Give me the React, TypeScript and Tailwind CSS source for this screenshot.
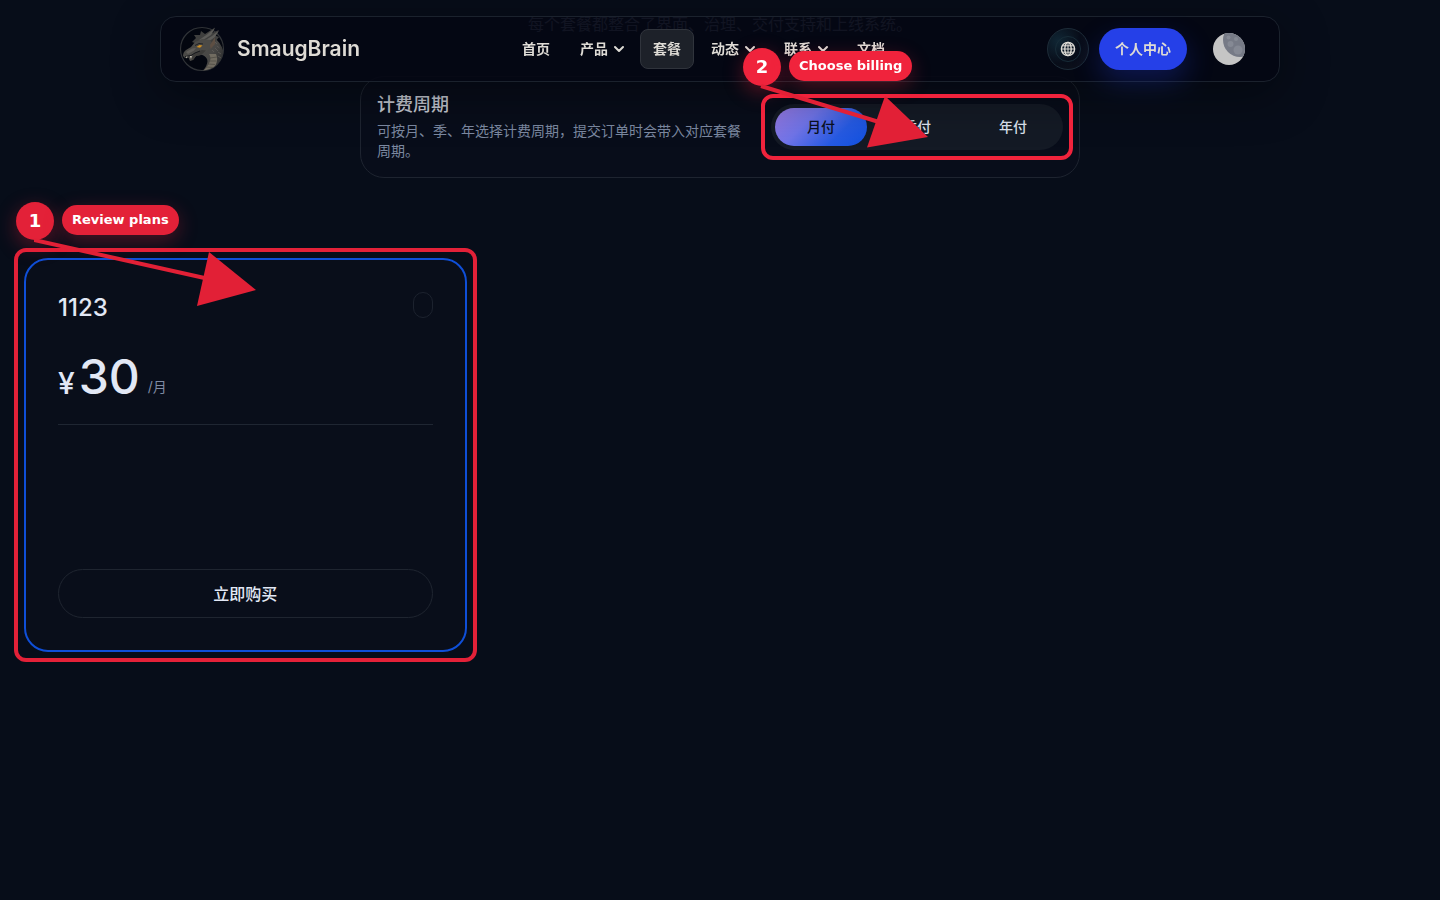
import React from 'react';
import { ChevronDown } from 'lucide-react';

const NAV = [
  { label: '首页', menu: false, active: false },
  { label: '产品', menu: true, active: false },
  { label: '套餐', menu: false, active: true },
  { label: '动态', menu: true, active: false },
  { label: '联系', menu: true, active: false },
  { label: '文档', menu: false, active: false },
];

function DragonLogo() {
  return (
    <svg viewBox="0 0 46 46" className="size-[46px] shrink-0" aria-hidden="true">
      <defs>
        <linearGradient id="neck" x1="0" y1="0" x2="1" y2="0.6">
          <stop offset="0" stopColor="#4b4a48" />
          <stop offset="0.6" stopColor="#484745" />
          <stop offset="1" stopColor="#2c2d2f" />
        </linearGradient>
        <clipPath id="disc"><circle cx="23" cy="23" r="21.500" /></clipPath>
      </defs>
      <circle cx="23" cy="23" r="21.500" fill="#03060f" stroke="#303337" strokeWidth="1.2" />
      <g clipPath="url(#disc)">
        <path d="M24 14 L37 13 Q44 20 45 29 Q44 42 30 46 L23 46 Q30 38 28 33 Q26 29 20 28Z" fill="url(#neck)" />
        <path d="M30 28 Q35 35 23 46 L31 46 Q41 37 37 28Z" fill="#716c61" />
        <path d="M31 32 L38 31 M31 35 L37.500 35 M29 38 L36 38.500 M27 41 L34 41.500" stroke="#4a4741" strokeWidth="0.7" />
        <path d="M36 16 l2 2 M38 20 l2.500 2 M36 22 l3 3 M39 26 l3 2 M39 30 l3 2 M33 24 l2 2" stroke="#5e5c58" strokeWidth="0.8" />
      </g>
      <path d="M16 17 L13 16 L17 12 L15 9 L21 9 L22 5 L26 8 L36 1.500 L33 7 L40 4 L36 9.500 L40 11 L36 16 L30 18Z" fill="#3f3f3e" />
      <path d="M20 14 L28 8.500 L36 2 L32 9 L24 14Z M25 15 L33 10 L40 4.500 L36 11 L29 16Z" fill="#5d5c59" />
      <path d="M4 30 Q4 26 7 24 L12 21 L16 16 L23 13 L31 14 L34 18 L31 22 L27 26 L22 29 L17 30 L14 34 L11 35 L9.500 31.500 L6 32Z" fill="#4b4a47" />
      <path d="M7 26 L13 22.500 L17 22 L15 24.500 L9 28Z" fill="#605e5a" />
      <path d="M15 27 L23 24 L27 24.500 L22 29 L17 30 L14 34 L12.500 33Z" fill="#3c3b39" />
      <path d="M6 30.500 L12 29.500 L16 27 L21 25" stroke="#15171b" strokeWidth="1" fill="none" />
      <path d="M31 19 L36 11.500 L36 18 L31.500 23Z" fill="#5e4f43" />
      <path d="M17.500 21 L20.500 19 L23.500 19.500 L21 21.800Z" fill="#cf8f22" />
      <path d="M16 19.500 L20 17.500 L24 18" stroke="#202124" strokeWidth="1" fill="none" />
      <path d="M7 30.800 l0.800 1.800 l0.700 -2Z M11 30 l1 3 l0.800 -3Z" fill="#d5cfc0" />
    </svg>
  );
}

function GlobeIcon() {
  return (
    <svg viewBox="0 0 16 16" className="size-4" fill="none" stroke="#dedbd5" strokeWidth="1.4" aria-hidden="true">
      <circle cx="8" cy="8" r="6.600" />
      <ellipse cx="8" cy="8" rx="3.200" ry="6.600" />
      <path d="M8 1.400 V14.600 M1.400 8 H14.600 M2.500 4.800 H13.500 M2.500 11.200 H13.500" strokeWidth="1" />
    </svg>
  );
}

function MoonIcon() {
  return (
    <svg viewBox="0 0 32 32" className="size-8" aria-hidden="true">
      <defs><clipPath id="moon"><circle cx="16" cy="16" r="16" /></clipPath></defs>
      <g clipPath="url(#moon)">
        <rect width="32" height="32" fill="#c5c5c5" />
        <circle cx="27" cy="7" r="17" fill="#767a86" />
        <g fill="#858994">
          <circle cx="17.500" cy="11" r="3" />
          <circle cx="25" cy="17" r="4.500" />
          <circle cx="15.500" cy="4.500" r="2" />
          <circle cx="23" cy="6" r="2" />
        </g>
      </g>
    </svg>
  );
}

function Header() {
  return (
    <header className="fixed inset-x-4 top-4 z-20 mx-auto flex h-[66px] max-w-[1120px] items-center justify-between rounded-2xl border border-[#1b222d] bg-[#040713]/90 pr-[34px] pl-[18px] shadow-[0_12px_48px_rgba(0,0,0,0.4)]">
      <a href="#home" className="flex items-center gap-3 text-[21px] font-semibold text-[#dedbd5]">
        <DragonLogo />
        SmaugBrain
      </a>
      <nav aria-label="主导航" className="flex items-center gap-1 text-sm font-bold text-[#dedbd5]">
        {NAV.map((item) => (
          <a
            key={item.label}
            href={'#' + item.label}
            className={
              item.active
                ? 'flex h-10 items-center rounded-lg border border-[#30343c] bg-[#1d2129] px-3'
                : 'flex h-10 items-center gap-[3px] rounded-lg border border-transparent px-3'
            }
          >
            {item.label}
            {item.menu && <ChevronDown className="-mr-1 size-4" strokeWidth={3} />}
          </a>
        ))}
      </nav>
      <div className="flex items-center">
        <button
          type="button"
          aria-label="语言"
          className="mr-2.5 flex size-[42px] items-center justify-center rounded-full border border-[#1d2c38] bg-[radial-gradient(circle_at_25%_30%,#102634,#080d19_55%,#11131c)]"
        >
          <span className="flex size-[26px] items-center justify-center rounded-full border border-[#182c38]">
            <GlobeIcon />
          </span>
        </button>
        <a href="#account" className="mr-[26px] flex h-[42px] items-center rounded-full bg-[#2540e8] px-4 text-sm font-bold text-[#dedbd5] shadow-[0_12px_28px_rgba(37,64,232,0.28)]">
          个人中心
        </a>
        <button type="button" aria-label="切换主题" className="rounded-full">
          <MoonIcon />
        </button>
      </div>
    </header>
  );
}

function Callout({ step, text, tone }: { step: number; text: string; tone: string }) {
  return (
    <div className="flex gap-2 font-['DejaVu_Sans',sans-serif] font-bold text-white">
      <span className={'flex size-[38px] items-center justify-center rounded-full text-lg shadow-[0_6px_20px_rgba(240,35,60,0.35)] ' + tone}>
        {step}
      </span>
      <span className={'mt-[3px] flex h-[30px] items-center rounded-full px-2.5 text-[13px] whitespace-nowrap shadow-[0_6px_20px_rgba(240,35,60,0.3)] ' + tone}>
        {text}
      </span>
    </div>
  );
}

function BillingSwitch() {
  return (
    <div className="relative shrink-0">
      <div role="group" aria-label="计费周期" className="flex gap-1 rounded-full bg-[#141a25] p-1 text-sm font-medium">
        <button type="button" aria-pressed="true" className="h-[38px] w-[92px] rounded-full bg-linear-[135deg,#9678e0,#7074e8_35%,#265ae2_70%,#1150df] text-[#0a1022]">月付</button>
        <button type="button" aria-pressed="false" className="h-[38px] w-[92px] rounded-full text-[#dce2ee]">季付</button>
        <button type="button" aria-pressed="false" className="h-[38px] w-[92px] rounded-full text-[#dce2ee]">年付</button>
      </div>
      <div className="pointer-events-none absolute -inset-2.5 z-30 rounded-xl border-4 border-[#f0233c]" />
      <div className="pointer-events-none absolute -top-14 -left-7 z-30">
        <Callout step={2} text="Choose billing" tone="bg-[#f0233c]" />
      </div>
      <svg viewBox="0 0 170 70" className="pointer-events-none absolute -top-5 -left-3 z-30 h-[70px] w-[170px]" aria-hidden="true">
        <path d="M2 2 L120 38" stroke="#e22036" strokeWidth="4" />
        <path d="M126 12 L169 53 L108 63.500Z" fill="#e22036" />
      </svg>
    </div>
  );
}

function PlanCard() {
  return (
    <article className="relative flex h-[394px] flex-col rounded-3xl border-2 border-[#0f4fd8] bg-[#090e1a] p-8 text-[#e2e8f5]">
      <div className="flex items-start justify-between">
        <h2 className="text-2xl leading-8 font-medium">1123</h2>
        <span className="h-[26px] w-5 rounded-full border border-[#1c222e]" />
      </div>
      <p className="mt-[25px] flex items-end border-b border-[#1f2632] pb-[19px]">
        <span className="text-3xl leading-11 font-medium">¥</span>
        <span className="ml-1 text-5xl leading-14 font-medium">30</span>
        <span className="ml-2 text-sm leading-9 text-[#7f8ba3]">/月</span>
      </p>
      <button type="button" className="mt-auto h-[49px] rounded-full border border-[#1f2530] text-base font-medium">
        立即购买
      </button>
      <div className="pointer-events-none absolute -inset-3 rounded-xl border-4 border-[#e32138]" />
      <div className="pointer-events-none absolute -top-[58px] -left-2.5">
        <Callout step={1} text="Review plans" tone="bg-[#e32138]" />
      </div>
      <svg viewBox="0 0 230 70" className="pointer-events-none absolute -top-[22px] left-2 h-[70px] w-[230px]" aria-hidden="true">
        <path d="M0 2 L175 41" stroke="#e22036" strokeWidth="4" />
        <path d="M175 14 L222 52 L163 68Z" fill="#e22036" />
      </svg>
    </article>
  );
}

export default function App() {
  return (
    <div className="min-h-screen bg-[#070d19] font-[Inter,'Noto_Sans_CJK_SC',sans-serif]">
      <Header />
      <main className="flex flex-col px-6 pt-3 pb-8">
        <p className="text-center text-base leading-6 text-[#8390a8]">每个套餐都整合了界面、治理、交付支持和上线系统。</p>
        <section className="mx-auto mt-10 flex w-full max-w-[720px] items-center justify-between gap-6 rounded-3xl border border-[#1e2430] bg-[#080d1a] p-4">
          <div>
            <h1 className="text-lg leading-6 font-medium text-[#c5c9d2]">计费周期</h1>
            <p className="mt-1 text-sm leading-5 text-[#7c89a1]">可按月、季、年选择计费周期，提交订单时会带入对应套餐周期。</p>
          </div>
          <BillingSwitch />
        </section>
        <section aria-label="套餐" className="mt-20 grid grid-cols-3 gap-8">
          <PlanCard />
        </section>
      </main>
    </div>
  );
}
